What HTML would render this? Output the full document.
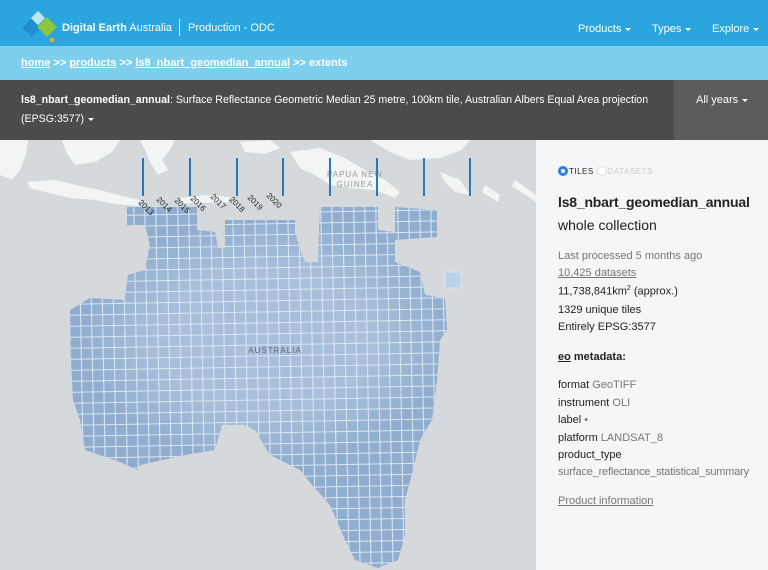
<!DOCTYPE html>
<html><head><meta charset="utf-8">
<style>
*{margin:0;padding:0;box-sizing:border-box}
body{width:768px;height:570px;overflow:hidden;font-family:"Liberation Sans",sans-serif;background:#d5d9dc;position:relative}
.hdr{position:absolute;left:0;top:0;width:768px;height:46px;background:#2aa5dd;color:#fff}
.crumb{position:absolute;left:0;top:46px;width:768px;height:34px;background:#7ecfee;color:#fff;font-size:11px;font-weight:bold;padding:11px 0 0 21px}
.crumb u{text-decoration:underline}
.bar{position:absolute;left:0;top:80px;width:768px;height:60px;background:#4b4b4b;color:#fff;font-size:10.6px;line-height:19px}
.bar .t{position:absolute;left:21px;top:11px;width:655px}
.bar .ay{position:absolute;left:674px;top:0;width:94px;height:60px;background:#5b5b5b;padding:11px 0 0 22px;font-size:11px}
.side{position:absolute;left:536px;top:140px;width:232px;height:430px;background:#f5f6f7;color:#222;font-size:11px}
.side .p{position:absolute;left:22px}
.g{color:#777}
.car{display:inline-block;width:0;height:0;border-left:3px solid transparent;border-right:3px solid transparent;border-top:3px solid #fff;vertical-align:middle;margin-left:4px}
</style></head><body>
<svg style="position:absolute;left:0;top:140px" width="536" height="430">
<rect width="536" height="430" fill="#d5d9dc"/>
<g fill="#f3f4f4">
<path d="M0 0 L28 0 L26 15 L20 30 L12 40 L0 35Z"/>
<path d="M62 0 L120 0 L112 12 L95 22 L75 25 L66 12Z"/>
<path d="M27 42 L55 40 L80 46 L100 50 L118 55 L140 60 L138 66 L115 64 L95 60 L70 58 L45 52 L30 48Z"/>
<path d="M140 0 L175 0 L170 10 L162 20 L168 30 L158 35 L150 22 L145 10Z"/>
<path d="M180 58 L205 55 L230 57 L228 62 L200 63 L182 63Z"/>
<path d="M240 2 L270 0 L280 8 L265 14 L245 12Z"/>
<path d="M290 12 L320 8 L345 18 L365 30 L385 40 L400 52 L395 58 L375 50 L350 48 L330 45 L315 35 L300 28Z"/>
<path d="M370 0 L470 0 L462 10 L440 18 L410 20 L390 12Z"/>
<path d="M440 32 L460 40 L470 55 L455 52 L445 42Z"/>
<path d="M485 45 L500 55 L498 62 L482 52Z"/>
<path d="M515 40 L536 55 L536 62 L512 46Z"/>
</g>
<text x="355" y="37" font-size="8" fill="#999" letter-spacing="1" text-anchor="middle">PAPUA NEW</text>
<text x="355" y="47" font-size="8" fill="#999" letter-spacing="1" text-anchor="middle">GUINEA</text>
<defs>
<pattern id="gr" width="11" height="11" patternUnits="userSpaceOnUse" patternTransform="rotate(-1)">
<path d="M0 0.5 H11 M0.5 0 V11" stroke="#dbe6f2" stroke-width="1.1"/>
</pattern>
<clipPath id="cp"><path d="M127 67 L197 67 L197 90 L215 92 L218 108 L225 108 L225 80 L295 80 L295 92 L300 110 L305 122 L318 122 L320 67 L378 67 L378 90 L395 92 L395 67 L437 70 L437 97 L395 100 L395 122 L420 132 L425 155 L445 158 L447 190 L440 200 L437 240 L432 280 L420 300 L413 330 L405 360 L405 395 L398 420 L378 428 L355 420 L345 400 L330 365 L312 345 L300 330 L270 315 L255 290 L245 285 L222 285 L215 310 L185 315 L140 325 L137 330 L120 322 L85 310 L80 280 L73 260 L70 200 L70 170 L90 158 L125 160 L128 135 L145 130 L150 105 L145 85 L127 85Z"/></clipPath>
<radialGradient id="rg" cx="0.5" cy="0.5" r="0.5"><stop offset="0.6" stop-color="#a7bfdb"/><stop offset="1" stop-color="#92aecf"/></radialGradient>
</defs>
<g clip-path="url(#cp)">
<rect width="536" height="430" fill="#90acce"/>
<ellipse cx="265" cy="200" rx="180" ry="120" fill="url(#rg)"/>
<rect width="536" height="430" fill="url(#gr)"/>
</g>
<rect x="445" y="132" width="16" height="16" fill="#b9d2ea" stroke="#dbe6f2"/>
<text x="275" y="213" font-size="8" fill="#5a6d85" letter-spacing="1" text-anchor="middle">AUSTRALIA</text>
<g stroke="#2a7ab0" stroke-width="2">
<path d="M143 18V56M190 18V56M237 18V56M283 18V56M330 18V56M377 18V56M424 18V56M470 18V56"/>
</g>
<g font-size="8" fill="#222">
<text transform="translate(138,63) rotate(45)">2013</text>
<text transform="translate(156,60) rotate(45)">2014</text>
<text transform="translate(174,61) rotate(45)">2015</text>
<text transform="translate(190,59) rotate(45)">2016</text>
<text transform="translate(210,57) rotate(45)">2017</text>
<text transform="translate(229,60) rotate(45)">2018</text>
<text transform="translate(247,58) rotate(45)">2019</text>
<text transform="translate(266,56) rotate(45)">2020</text>
</g>
</svg>
<div class="hdr">
<svg style="position:absolute;left:21px;top:11px" width="40" height="32">
<rect x="4" y="10" width="13" height="13" fill="#1f8fd0" transform="rotate(45 10.5 16.5)"/>
<rect x="12" y="2" width="10" height="10" fill="#bfe6f6" transform="rotate(45 17 7)"/>
<rect x="19" y="9" width="14" height="14" fill="#8dc63f" transform="rotate(45 26 16)"/>
<rect x="29" y="27" width="4" height="4" fill="#f5a623" transform="rotate(45 31 29)"/>
</svg>
<div style="position:absolute;left:62px;top:22px;font-size:11px"><b>Digital Earth</b> Australia</div>
<div style="position:absolute;left:179px;top:19px;width:1px;height:17px;background:#fff"></div>
<div style="position:absolute;left:188px;top:22px;font-size:11px">Production - ODC</div>
<div style="position:absolute;left:578px;top:23px;font-size:11px">Products<span class="car"></span></div>
<div style="position:absolute;left:652px;top:23px;font-size:11px">Types<span class="car"></span></div>
<div style="position:absolute;left:712px;top:23px;font-size:11px">Explore<span class="car"></span></div>
</div>
<div class="crumb"><u>home</u> &gt;&gt; <u>products</u> &gt;&gt; <u>ls8_nbart_geomedian_annual</u> &gt;&gt; extents</div>
<div class="bar"><div class="t"><b>ls8_nbart_geomedian_annual</b>: Surface Reflectance Geometric Median 25 metre, 100km tile, Australian Albers Equal Area projection (EPSG:3577)<span class="car"></span></div>
<div class="ay">All years<span class="car"></span></div></div>
<div class="side">
<div class="p" style="top:26px;font-size:8px;letter-spacing:.5px;display:flex;align-items:center">
<span style="width:10px;height:10px;border-radius:50%;background:#2d7ee0;display:inline-block;position:relative;margin-right:1px"><span style="position:absolute;left:3px;top:3px;width:4px;height:4px;border-radius:50%;background:#fff"></span></span>TILES
<span style="width:10px;height:10px;border-radius:50%;border:1px solid #ddd;background:#fff;display:inline-block;margin-left:3px;margin-right:1px"></span><span style="color:#ccc">DATASETS</span></div>
<div class="p" style="top:54px;font-size:14px;font-weight:bold;letter-spacing:-0.2px">ls8_nbart_geomedian_annual</div>
<div class="p" style="top:77px;font-size:14px">whole collection</div>
<div class="p g" style="top:110px">Last processed 5 months ago</div>
<div class="p g" style="top:127px;text-decoration:underline">10,425 datasets</div>
<div class="p" style="top:145px">11,738,841km<sup style="font-size:7px">2</sup> (approx.)</div>
<div class="p" style="top:164px">1329 unique tiles</div>
<div class="p" style="top:181px">Entirely EPSG:3577</div>
<div class="p" style="top:211px;font-weight:bold"><u>eo</u> metadata:</div>
<div class="p" style="top:239px">format <span class="g">GeoTIFF</span></div>
<div class="p" style="top:257px">instrument <span class="g">OLI</span></div>
<div class="p" style="top:274px">label <span class="g">•</span></div>
<div class="p" style="top:292px">platform <span class="g">LANDSAT_8</span></div>
<div class="p" style="top:309px">product_type</div>
<div class="p g" style="top:326px;letter-spacing:-0.2px">surface_reflectance_statistical_summary</div>
<div class="p g" style="top:355px;text-decoration:underline">Product information</div>
</div>
</body></html>
